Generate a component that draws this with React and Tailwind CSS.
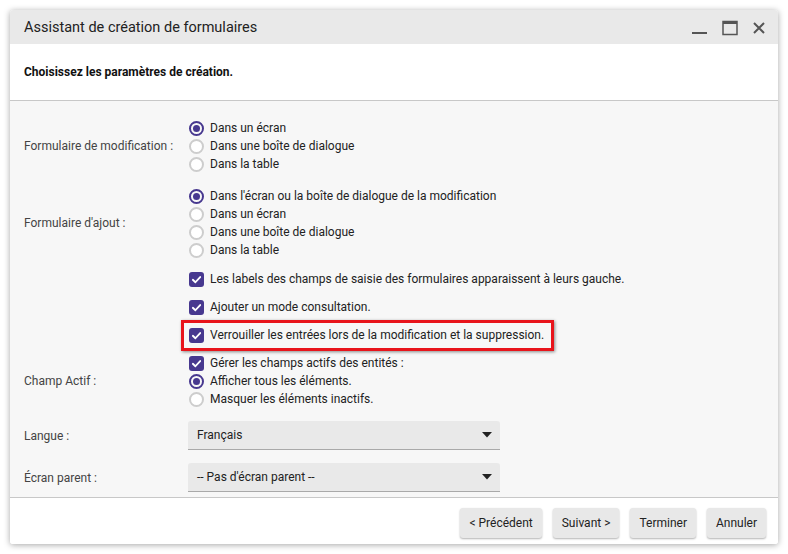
import React from 'react';

const font = { fontFamily: 'Roboto, "Liberation Sans", sans-serif' };

const Radio = ({ checked, label }) => (
  <div className="flex items-center h-[18px]">
    <span
      className={`w-[15px] h-[15px] rounded-full flex items-center justify-center shrink-0 ${
        checked ? 'border-2 border-[#47388f]' : 'border-2 border-[#cdcdcd] bg-white'
      }`}
    >
      {checked && <span className="w-[7px] h-[7px] rounded-full bg-[#47388f]" />}
    </span>
    <span className="ml-[6px] text-[12px] text-[#222]">{label}</span>
  </div>
);

const Check = ({ label }) => (
  <div className="flex items-center h-[18px]">
    <span className="w-[15px] h-[15px] rounded-[3px] bg-[#47388f] flex items-center justify-center shrink-0">
      <svg width="11" height="11" viewBox="0 0 12 12">
        <path d="M2 6.3 L4.8 9 L10 3.3" fill="none" stroke="white" strokeWidth="2" strokeLinecap="round" strokeLinejoin="round" />
      </svg>
    </span>
    <span className="ml-[6px] text-[12px] text-[#222]">{label}</span>
  </div>
);

const Select = ({ value }) => (
  <div className="w-[312px] h-[29px] bg-[#e9e9e9] rounded-t-[3px] border-b border-[#a9a9a9] flex items-center justify-between pl-[9px] pr-[8px]">
    <span className="text-[12px] text-[#222]">{value}</span>
    <svg width="10" height="6" viewBox="0 0 10 6">
      <path d="M0 0 H10 L5 5.5 Z" fill="#222" />
    </svg>
  </div>
);

const Btn = ({ children }) => (
  <button className="h-[30px] px-[9px] bg-[#e8e8e8] rounded-[3px] text-[12px] text-[#222] shadow-[0_1px_2px_rgba(0,0,0,0.3)]">
    {children}
  </button>
);

export default function App() {
  return (
    <div className="w-[788px] h-[554px] bg-white pt-[10px] pl-[10px]" style={font}>
      <div className="w-[768px] h-[534px] rounded-[3px] shadow-[0_1px_6px_rgba(0,0,0,0.35)] flex flex-col overflow-hidden bg-white">
        {/* Title bar */}
        <div className="h-[34px] bg-[#e9e9e9] flex items-center justify-between pl-[14px] pr-[12px] pt-[1px] shrink-0">
          <span className="text-[14.5px] text-[#222]">Assistant de création de formulaires</span>
          <div className="flex items-center gap-[14px]">
            <svg width="16" height="16" viewBox="0 0 16 16">
              <rect x="0" y="12" width="15" height="2" fill="#555" />
            </svg>
            <svg width="16" height="16" viewBox="0 0 16 16">
              <rect x="1" y="1.5" width="14" height="13" fill="none" stroke="#555" strokeWidth="1.5" />
              <rect x="1" y="1" width="14" height="3" fill="#555" />
            </svg>
            <svg width="14" height="14" viewBox="0 0 14 14">
              <path d="M2 2 L12 12 M12 2 L2 12" stroke="#555" strokeWidth="2" />
            </svg>
          </div>
        </div>

        {/* Header */}
        <div className="h-[57px] bg-white border-b border-[#c8c8c8] flex items-center pl-[14px] shrink-0">
          <span className="text-[12px] font-bold text-[#111]">Choisissez les paramètres de création.</span>
        </div>

        {/* Content */}
        <div className="flex-1 bg-[#f7f7f7] pl-[14px] pt-[18px] flex flex-col">
          <div className="flex items-center">
            <div className="w-[165px] text-[12px] text-[#444]">Formulaire de modification :</div>
            <div className="flex flex-col">
              <Radio checked label="Dans un écran" />
              <Radio label="Dans une boîte de dialogue" />
              <Radio label="Dans la table" />
            </div>
          </div>

          <div className="flex items-center mt-[14px]">
            <div className="w-[165px] text-[12px] text-[#444]">Formulaire d'ajout :</div>
            <div className="flex flex-col">
              <Radio checked label="Dans l'écran ou la boîte de dialogue de la modification" />
              <Radio label="Dans un écran" />
              <Radio label="Dans une boîte de dialogue" />
              <Radio label="Dans la table" />
            </div>
          </div>

          <div className="flex flex-col pl-[165px] mt-[11px] gap-[10px]">
            <Check label="Les labels des champs de saisie des formulaires apparaissent à leurs gauche." />
            <Check label="Ajouter un mode consultation." />
            <div className="relative">
              <Check label="Verrouiller les entrées lors de la modification et la suppression." />
              <div className="absolute left-[-8px] top-[-6px] w-[373px] h-[31px] border-[3px] border-[#e8141b] shadow-[1px_1px_3px_rgba(0,0,0,0.45)]" />
            </div>
          </div>

          <div className="flex items-center mt-[10px]">
            <div className="w-[165px] text-[12px] text-[#444]">Champ Actif :</div>
            <div className="flex flex-col">
              <Check label="Gérer les champs actifs des entités :" />
              <Radio checked label="Afficher tous les éléments." />
              <Radio label="Masquer les éléments inactifs." />
            </div>
          </div>

          <div className="flex items-center mt-[13px]">
            <div className="w-[164px] text-[12px] text-[#444]">Langue :</div>
            <Select value="Français" />
          </div>

          <div className="flex items-center mt-[13px]">
            <div className="w-[164px] text-[12px] text-[#444]">Écran parent :</div>
            <Select value="-- Pas d'écran parent --" />
          </div>
        </div>

        {/* Footer */}
        <div className="h-[47px] bg-white border-t border-[#c8c8c8] flex items-center justify-end gap-[11px] pr-[12px] pt-[3px] shrink-0">
          <Btn>&lt; Précédent</Btn>
          <Btn>Suivant &gt;</Btn>
          <Btn>Terminer</Btn>
          <Btn>Annuler</Btn>
        </div>
      </div>
    </div>
  );
}
